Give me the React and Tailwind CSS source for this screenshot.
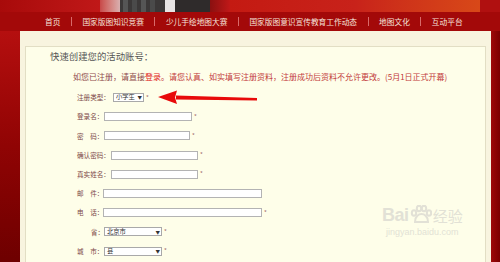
import React from 'react';

const navItems = ['首页', '国家版图知识竞赛', '少儿手绘地图大赛', '国家版图意识宣传教育工作动态', '地图文化', '互动平台'];

// form rows: label, label width, control
const rows = [
  { label: '注册类型：', lw: 'w-[36px]', kind: 'select', cw: 'w-[31px]', value: '小学生' },
  { label: '登录名：', lw: 'w-[27px]', kind: 'input', cw: 'w-[88px]' },
  { label: '密　码：', lw: 'w-[27px]', kind: 'input', cw: 'w-[86px]' },
  { label: '确认密码：', lw: 'w-[34px]', kind: 'input', cw: 'w-[87px]' },
  { label: '真实姓名：', lw: 'w-[34px]', kind: 'input', cw: 'w-[87px]' },
  { label: '邮　件：', lw: 'w-[26px]', kind: 'input', cw: 'w-[159px]', noStar: true },
  { label: '电　话：', lw: 'w-[26px]', kind: 'input', cw: 'w-[159px]' },
  { label: '省：', lw: 'w-[27px]', kind: 'select', cw: 'w-[58px]', value: '北京市', right: true },
  { label: '城　市：', lw: 'w-[27px]', kind: 'select', cw: 'w-[58px]', value: '县' },
];

function Select({ width, value }) {
  return (
    <div className={`${width} h-[9px] bg-white border border-[#a9a9a9] flex items-center justify-between pl-[2px] pr-[1px] overflow-hidden select-none`}>
      <span className="text-[6.3px] leading-none text-[#333] whitespace-nowrap">{value}</span>
      <span className="text-[4.5px] leading-none text-[#333] pl-[1px]">▼</span>
    </div>
  );
}

function FormRow({ row }) {
  return (
    <div className="h-[19.2px] flex items-center pl-[51px]">
      <span className={`${row.lw} ${row.right ? 'text-right' : ''} text-[6.6px] leading-none text-[#7d4848] whitespace-nowrap`}>
        {row.label}
      </span>
      {row.kind === 'select' ? (
        <Select width={row.cw} value={row.value} />
      ) : (
        <input readOnly tabIndex={-1} className={`${row.cw} h-[9px] bg-white border border-[#b3b3b3] outline-none`} />
      )}
      {!row.noStar && <span className="ml-[2px] text-[6px] leading-none text-[#a06a6a]">*</span>}
    </div>
  );
}

export default function App() {
  return (
    <div className="relative w-[500px] h-[262px] overflow-hidden bg-[#7a0000] select-none" style={{ fontFamily: '"Noto Sans CJK SC", "Noto Sans", sans-serif' }}>
      {/* Banner strip */}
      <div className="h-[12px] flex">
        <div className="w-[100px] bg-gradient-to-r from-[#a80a0a] to-[#c01818]" />
        <div className="w-[20px] bg-gradient-to-r from-[#c84848] to-[#d8b0b0]" />
        <div className="w-[45px] bg-[#3b3838] flex gap-[4px] px-[3px]">
          <div className="w-[5px] bg-[#555]" />
          <div className="w-[5px] bg-[#4a4a4a]" />
          <div className="w-[5px] bg-[#555]" />
          <div className="w-[5px] bg-[#4a4a4a]" />
        </div>
        <div className="w-[10px] bg-[#e8e4e4]" />
        <div className="w-[35px] bg-[#2f2b2b]" />
        <div className="w-[20px] bg-gradient-to-r from-[#8a1010] to-[#c01818]" />
        <div className="flex-1 bg-gradient-to-r from-[#c41a12] via-[#c8221a] to-[#d84818]" />
        <div className="w-[20px] bg-[#b01010]" />
      </div>

      {/* Navigation */}
      <div className="h-[19px] flex items-center bg-[#a30909] pl-[45px]">
        {navItems.map((item, i) => (
          <div key={item} className="flex items-center">
            {i > 0 && <span className="w-px h-[9px] bg-[#d86a6a] mx-[10.5px]" />}
            <span className="text-[7.7px] leading-none text-[#f6e4dc] whitespace-nowrap">{item}</span>
          </div>
        ))}
      </div>

      {/* Body */}
      <div className="flex h-[231px]">
        <div className="w-[20px] bg-gradient-to-b from-[#b50f0f] via-[#900404] to-[#6e0000]" />
        <div className="flex-1 bg-[#f8f4df] pt-[15px] px-[5px]">
          <div className="h-full border border-[#e2dec4] border-b-0 bg-[#fefee9]">
            <div className="pl-[24px] pt-[2px] text-[9.4px] leading-[14px] text-[#555]">快速创建您的活动账号：</div>
            <div className="pl-[47px] pt-[9px] pb-[4px] text-[8px] leading-[10px] whitespace-nowrap text-[#c23a3a]">
              <span className="text-[#8e4a4a]">如您已注册，请直接</span>
              <span className="text-[#e02020]">登录</span>
              。请您认真、如实填写注册资料，注册成功后资料不允许更改。(5月1日正式开幕)
            </div>
            <div className="pt-[2px]">
              {rows.map((row) => (
                <FormRow key={row.label} row={row} />
              ))}
            </div>
          </div>
        </div>
        <div className="w-[9px] bg-gradient-to-r from-[#9e0a0a] to-[#7c0000]" />
      </div>

      {/* Red arrow annotation */}
      <svg className="absolute left-[156px] top-[89px]" width="104" height="16" viewBox="0 0 104 16">
        <path d="M20 6.5 L101 9 L101 11.5 L20 10.5 Z" fill="#e80a0a" />
        <path d="M2 8 L21 1.5 L19 8.5 L21 15 Z" fill="#e80a0a" />
      </svg>

      {/* Watermark */}
      <div className="absolute left-[382px] top-[205px] flex flex-col items-center opacity-90">
        <div className="flex items-center text-[#e0ded4]">
          <span className="text-[18px] leading-none font-bold tracking-tight" style={{ fontFamily: '"Liberation Sans", sans-serif' }}>Bai</span>
          <svg width="22" height="20" viewBox="0 0 22 20" className="mx-[1px]">
            <g fill="none" stroke="#e0ded4" strokeWidth="2">
              <ellipse cx="4" cy="8" rx="2.2" ry="2.8" />
              <ellipse cx="9" cy="3.5" rx="2.2" ry="2.8" />
              <ellipse cx="14" cy="3.5" rx="2.2" ry="2.8" />
              <ellipse cx="19" cy="8" rx="2.2" ry="2.8" />
              <path d="M5 17 C5 11 9 9 11.5 9 C14 9 18 11 18 17 Z" />
            </g>
          </svg>
          <span className="text-[15px] leading-none">经验</span>
        </div>
        <span className="text-[9px] leading-none mt-[3px] text-[#e0ded4]" style={{ fontFamily: '"Liberation Sans", sans-serif' }}>jingyan.baidu.com</span>
      </div>
    </div>
  );
}
